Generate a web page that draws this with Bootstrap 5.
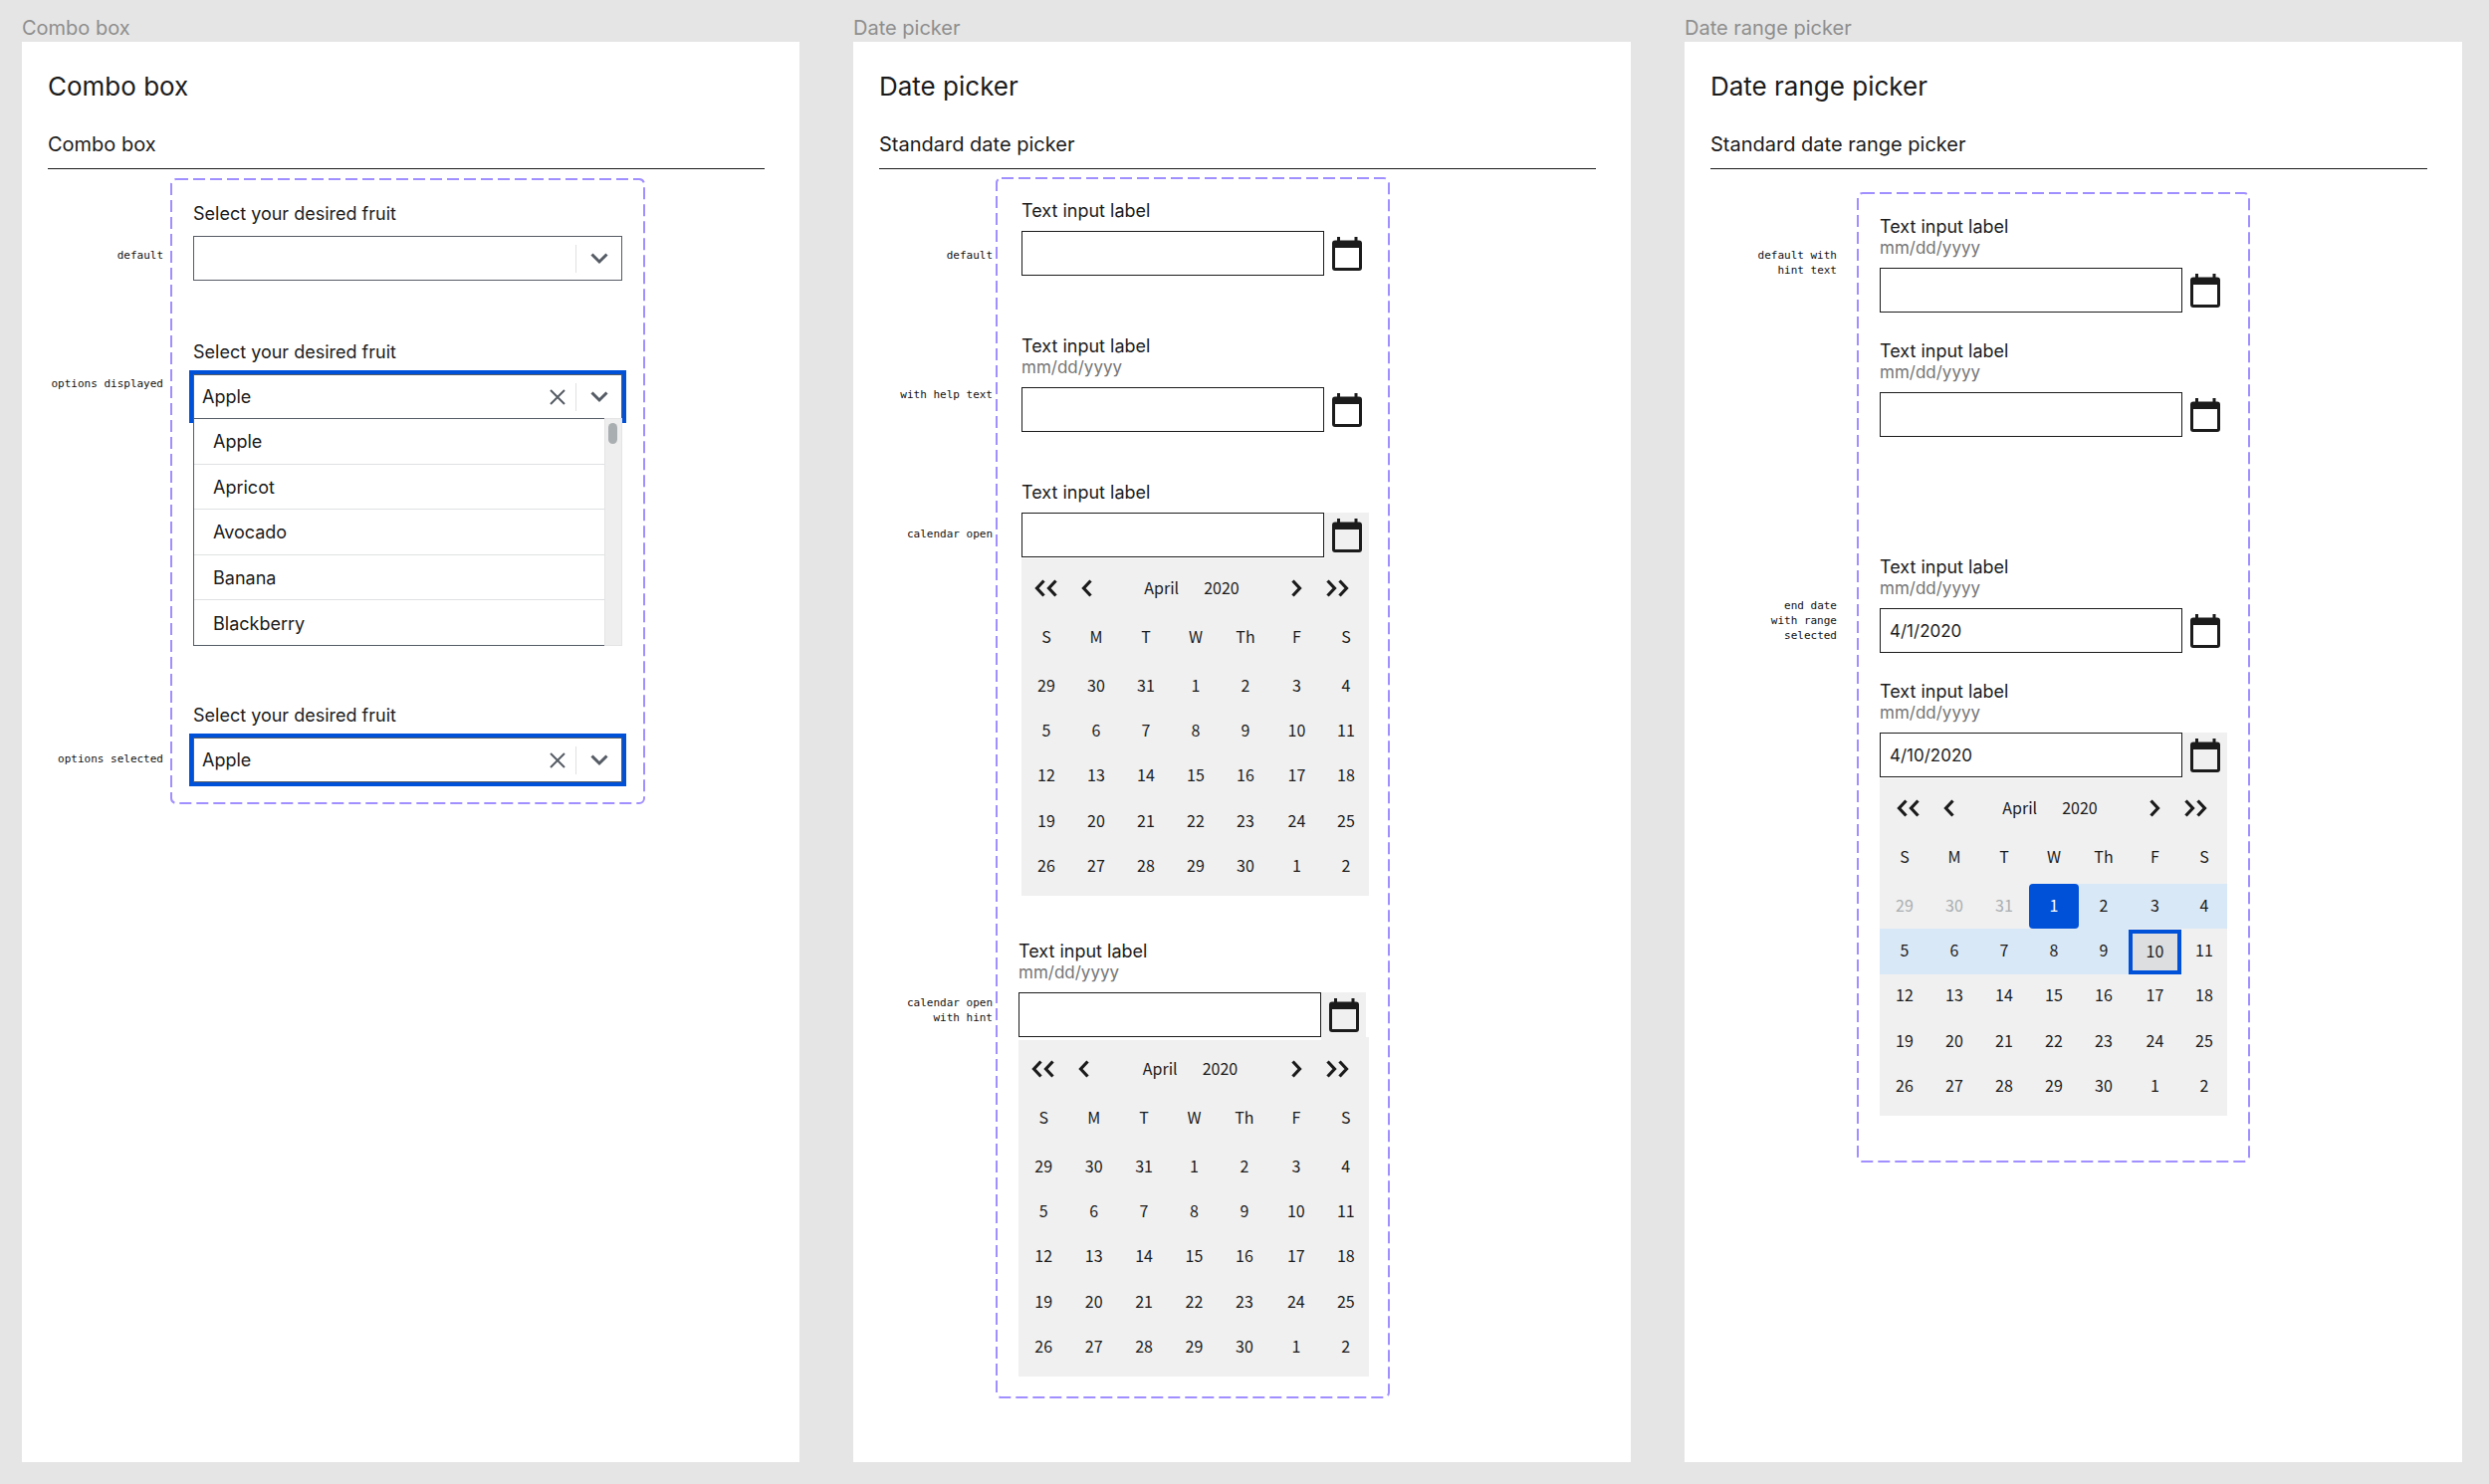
<!DOCTYPE html>
<html lang="en">
<head>
<meta charset="utf-8">
<meta name="viewport" content="width=device-width, initial-scale=1">
<title>Combo box, date picker, date range picker</title>
<link href="https://cdn.jsdelivr.net/npm/bootstrap@5.3.0/dist/css/bootstrap.min.css" rel="stylesheet">
<style>
:root{--ink:#1b1b1b;--slate:#565c65;--focus:#0050d8;--panel-grey:#f0f0f0}
body{background:#e5e5e5;color:var(--ink);font-family:Inter,"Liberation Sans",sans-serif;font-size:18px;line-height:22px}
.board{gap:54px;padding:16px 27px 22px 22px}
.frame{flex:1 1 0;min-width:0}
.frame-name{font-size:20px;line-height:24px;padding-bottom:2px;color:#8e8e8e}
.sheet{padding:29px 35px 20px 26px}
.sheet h1{font-size:26px;line-height:32px;margin:0 0 30px;font-weight:400}
.sheet h2{font-size:20px;line-height:24px;margin:0;padding-bottom:12px;font-weight:400;border-bottom:1px solid var(--ink)}
.captions{font:11px/15px "DejaVu Sans Mono",monospace;text-align:right;flex:none;color:#111}
.captions p{margin:0}
.outline{position:absolute;inset:0;width:100%;height:100%;pointer-events:none}
.outline rect{fill:none;stroke:#a08fff;stroke-width:2;stroke-dasharray:12 5;x:1px;y:1px;width:calc(100% - 2px);height:calc(100% - 2px);rx:5px}
label{display:block}
svg{display:block}
button{border:0;background:none;padding:0;color:inherit;font:inherit}

/* combo box */
.set-combo{margin-top:9px}
.set-combo .captions{width:123px;padding-right:7px}
.set-combo .variants{width:477px;padding:25px 23px 22px}
.combo{height:45px;margin-top:11px;border:1px solid var(--slate);background:#fff;color:var(--slate)}
.combo input{border:0;outline:0;padding:0 8px;min-width:0;color:var(--ink);background:none}
.combo .clear{width:36px}
.combo .toggle{width:46px;height:28px;border-left:1px solid #dfe1e2}
.combo.focused{box-shadow:0 0 0 4px var(--focus)}
.options{height:229px;margin-top:-1px;position:relative}
.options ul{border:1px solid var(--slate);border-right:0;background:#fff}
.options li{padding:2px 0 0 19px;display:flex;align-items:center;flex:1}
.options li+li{border-top:1px solid #dfe1e2}
.track{width:18px;background:#eee;border:1px solid #e4e4e4;padding:4px 0 0 3px}
.thumb{width:9px;height:21px;border-radius:5px;background:#a9aeb1}

/* date fields */
.set-date{margin-top:8px}
.set-date .captions{width:117px;padding-right:3px}
.set-date .variants{width:396px;padding:23px 21px 22px 26px}
.set-range{margin-top:23px}
.set-range .captions{width:147px;padding-right:20px}
.set-range .variants{width:395px;padding:24px 23px 47px}
.hint{color:#757575;font-size:17px;line-height:21px}
.entry{margin-top:9px}
.entry input{width:304px;height:45px;border:1px solid var(--ink);border-radius:0;background:#fff;padding:0 9px;font-size:17px;color:var(--ink);position:relative}
.entry button{width:45px;padding:6px 0 0 8px}
.open button.cal{background:var(--panel-grey)}
.open .entry input{box-shadow:0 1px #fff}
.open.shifted{margin-left:-3px}
.open.shifted .entry input{box-shadow:0 3px #fff}
.open.shifted .month{padding-top:1px;height:341px}
.month{height:340px;background:var(--panel-grey);font-family:"Noto Sans CJK SC",sans-serif;font-size:16px}
.month nav{height:62px;padding:0 20px 0 13px}
.month nav .pair{gap:24px}
.month nav .when{gap:25px;padding-bottom:2px}
.set-range .month nav .pair:first-child{margin:0 -4px 0 4px}
.month table{width:100%;table-layout:fixed;text-align:center;line-height:20px}
.month thead{height:45px}
.month th{font-weight:400;padding:0 0 11px}
.month tbody{height:227px}
.month td{height:45px;padding:0 0 4px}
.in-range{background:#d9e8f6}
.outside{color:#a9aeb1}
.range-start{background:linear-gradient(90deg,var(--panel-grey) 50%,#d9e8f6 50%)}
.range-start span,.range-end span{display:flex;align-items:center;justify-content:center;height:45px;margin-bottom:-4px;padding-bottom:3px}
.range-start span{background:var(--focus);color:#fff;border-radius:4px}
.range-end span{border:4px solid var(--focus);background:#dcdee0}
</style>
</head>
<body>
<svg width="0" height="0" class="position-absolute" aria-hidden="true">
  <symbol id="i-cal" viewBox="0 0 30 34"><path fill="#1b1b1b" fill-rule="evenodd" d="M5 0h3v3.500h14.500V0h3v3.500H27a3 3 0 0 1 3 3V31a3 3 0 0 1-3 3H3a3 3 0 0 1-3-3V6.500a3 3 0 0 1 3-3h2zM3 11v20h24V11z"/></symbol>
  <symbol id="i-down" viewBox="0 0 18 12"><path fill="none" stroke="currentColor" stroke-width="3" d="M1.500 1.500 9 9l7.500-7.500"/></symbol>
  <symbol id="i-x" viewBox="0 0 16 16"><path fill="none" stroke="currentColor" stroke-width="2" d="m1 1 14 14M15 1 1 15"/></symbol>
  <symbol id="i-prev" viewBox="0 0 11 18"><path fill="none" stroke="#1b1b1b" stroke-width="3.200" d="M9.500 1.500 2.500 9l7 7.500"/></symbol>
  <symbol id="i-prev2" viewBox="0 0 23 18"><path fill="none" stroke="#1b1b1b" stroke-width="3.200" d="M9.500 1.500 2.500 9l7 7.500M21.500 1.500l-7 7.500 7 7.500"/></symbol>
  <symbol id="i-next" viewBox="0 0 11 18"><path fill="none" stroke="#1b1b1b" stroke-width="3.200" d="m1.500 1.500 7 7.500-7 7.500"/></symbol>
  <symbol id="i-next2" viewBox="0 0 23 18"><path fill="none" stroke="#1b1b1b" stroke-width="3.200" d="m1.500 1.500 7 7.500-7 7.500M13.500 1.500l7 7.500-7 7.500"/></symbol>
</svg>

<main class="board d-flex min-vh-100">
  <section class="frame d-flex flex-column">
    <div class="frame-name">Combo box</div>
    <div class="sheet bg-white flex-grow-1">
      <h1>Combo box</h1>
      <h2>Combo box</h2>
      <div class="set-combo d-flex align-items-start">
        <div class="captions">
          <p style="margin-top:70px">default</p>
          <p style="margin-top:114px">options displayed</p>
          <p style="margin-top:362px">options selected</p>
        </div>
        <div class="variants position-relative">
          <svg class="outline" aria-hidden="true"><rect/></svg>
          <div>
            <label for="fruit1">Select your desired fruit</label>
            <div class="combo d-flex align-items-center">
              <input id="fruit1" type="text" class="flex-fill">
              <button class="toggle d-flex align-items-center justify-content-center" aria-label="Show options"><svg width="18" height="12"><use href="#i-down"/></svg></button>
            </div>
          </div>
          <div style="margin-top:61px">
            <label for="fruit2">Select your desired fruit</label>
            <div class="combo focused d-flex align-items-center">
              <input id="fruit2" type="text" class="flex-fill" value="Apple">
              <button class="clear d-flex align-items-center justify-content-center" aria-label="Clear"><svg width="16" height="16"><use href="#i-x"/></svg></button>
              <button class="toggle d-flex align-items-center justify-content-center" aria-label="Hide options"><svg width="18" height="12"><use href="#i-down"/></svg></button>
            </div>
            <div class="options d-flex">
              <ul class="list-unstyled m-0 flex-fill d-flex flex-column">
                <li>Apple</li><li>Apricot</li><li>Avocado</li><li>Banana</li><li>Blackberry</li>
              </ul>
              <div class="track"><div class="thumb"></div></div>
            </div>
          </div>
          <div style="margin-top:59px">
            <label for="fruit3">Select your desired fruit</label>
            <div class="combo focused d-flex align-items-center">
              <input id="fruit3" type="text" class="flex-fill" value="Apple">
              <button class="clear d-flex align-items-center justify-content-center" aria-label="Clear"><svg width="16" height="16"><use href="#i-x"/></svg></button>
              <button class="toggle d-flex align-items-center justify-content-center" aria-label="Show options"><svg width="18" height="12"><use href="#i-down"/></svg></button>
            </div>
          </div>
        </div>
      </div>
    </div>
  </section>

  <section class="frame d-flex flex-column">
    <div class="frame-name">Date picker</div>
    <div class="sheet bg-white flex-grow-1">
      <h1>Date picker</h1>
      <h2>Standard date picker</h2>
      <div class="set-date d-flex align-items-start">
        <div class="captions">
          <p style="margin-top:71px">default</p>
          <p style="margin-top:125px">with help text</p>
          <p style="margin-top:125px">calendar open</p>
          <p style="margin-top:456px">calendar open<br>with hint</p>
        </div>
        <div class="variants position-relative">
          <svg class="outline" aria-hidden="true"><rect/></svg>
          <div>
            <label for="date1">Text input label</label>
            <div class="entry d-flex"><input id="date1" type="text"><button class="cal d-flex" aria-label="Open calendar"><svg width="30" height="34"><use href="#i-cal"/></svg></button></div>
          </div>
          <div style="margin-top:60px">
            <label for="date2">Text input label</label>
            <div class="hint">mm/dd/yyyy</div>
            <div class="entry d-flex"><input id="date2" type="text"><button class="cal d-flex" aria-label="Open calendar"><svg width="30" height="34"><use href="#i-cal"/></svg></button></div>
          </div>
          <div class="open" style="margin-top:50px">
            <label for="date3">Text input label</label>
            <div class="entry d-flex"><input id="date3" type="text"><button class="cal d-flex" aria-label="Close calendar"><svg width="30" height="34"><use href="#i-cal"/></svg></button></div>
            <div class="month"></div>
          </div>
          <div class="open shifted" style="margin-top:45px">
            <label for="date4">Text input label</label>
            <div class="hint">mm/dd/yyyy</div>
            <div class="entry d-flex"><input id="date4" type="text"><button class="cal d-flex" aria-label="Close calendar"><svg width="30" height="34"><use href="#i-cal"/></svg></button></div>
            <div class="month"></div>
          </div>
        </div>
      </div>
    </div>
  </section>

  <section class="frame d-flex flex-column">
    <div class="frame-name">Date range picker</div>
    <div class="sheet bg-white flex-grow-1">
      <h1>Date range picker</h1>
      <h2>Standard date range picker</h2>
      <div class="set-range d-flex align-items-start">
        <div class="captions">
          <p style="margin-top:56px">default with<br>hint text</p>
          <p style="margin-top:322px">end date<br>with range<br>selected</p>
        </div>
        <div class="variants position-relative">
          <svg class="outline" aria-hidden="true"><rect/></svg>
          <div>
            <label for="range1">Text input label</label>
            <div class="hint">mm/dd/yyyy</div>
            <div class="entry d-flex"><input id="range1" type="text"><button class="cal d-flex" aria-label="Open calendar"><svg width="30" height="34"><use href="#i-cal"/></svg></button></div>
          </div>
          <div style="margin-top:28px">
            <label for="range2">Text input label</label>
            <div class="hint">mm/dd/yyyy</div>
            <div class="entry d-flex"><input id="range2" type="text"><button class="cal d-flex" aria-label="Open calendar"><svg width="30" height="34"><use href="#i-cal"/></svg></button></div>
          </div>
          <div style="margin-top:120px">
            <label for="range3">Text input label</label>
            <div class="hint">mm/dd/yyyy</div>
            <div class="entry d-flex"><input id="range3" type="text" value="4/1/2020"><button class="cal d-flex" aria-label="Open calendar"><svg width="30" height="34"><use href="#i-cal"/></svg></button></div>
          </div>
          <div class="open" style="margin-top:28px">
            <label for="range4">Text input label</label>
            <div class="hint">mm/dd/yyyy</div>
            <div class="entry d-flex"><input id="range4" type="text" value="4/10/2020"><button class="cal d-flex" aria-label="Close calendar"><svg width="30" height="34"><use href="#i-cal"/></svg></button></div>
            <div class="month" data-start="1" data-end="10"></div>
          </div>
        </div>
      </div>
    </div>
  </section>
</main>

<script src="https://cdn.jsdelivr.net/npm/bootstrap@5.3.0/dist/js/bootstrap.bundle.min.js"></script>
<script>
// Builds the April 2020 grid; data-start and data-end mark a selected range.
document.querySelectorAll('.month').forEach(function (box) {
  var start = +box.dataset.start, end = +box.dataset.end, rows = '';
  for (var r = 0; r < 5; r++) {
    rows += '<tr>';
    for (var c = 0; c < 7; c++) {
      var n = r * 7 + c - 2, cls = '';
      var text = n < 1 ? n + 31 : n > 30 ? n - 30 : n;
      if (start) {
        if (n < 1) cls = 'outside';
        else if (n === start) cls = 'range-start';
        else if (n === end) cls = 'range-end';
        else if (n > start && n < end) cls = 'in-range';
      }
      rows += '<td class="' + cls + '"><span>' + text + '</span></td>';
    }
    rows += '</tr>';
  }
  var btn = function (id, w, name) {
    return '<button aria-label="' + name + '"><svg width="' + w + '" height="18"><use href="#' + id + '"/></svg></button>';
  };
  box.innerHTML =
    '<nav class="d-flex align-items-center justify-content-between">' +
    '<div class="pair d-flex">' + btn('i-prev2', 23, 'Previous year') + btn('i-prev', 11, 'Previous month') + '</div>' +
    '<div class="when d-flex"><button>April</button><button>2020</button></div>' +
    '<div class="pair d-flex">' + btn('i-next', 11, 'Next month') + btn('i-next2', 23, 'Next year') + '</div></nav>' +
    '<table><colgroup><col width="50"><col width="50"><col width="50"><col width="50"><col width="50"><col width="53"><col width="46"></colgroup>' +
    '<thead><tr><th>S</th><th>M</th><th>T</th><th>W</th><th>Th</th><th>F</th><th>S</th></tr></thead><tbody>' + rows + '</tbody></table>';
});
</script>
</body>
</html>
